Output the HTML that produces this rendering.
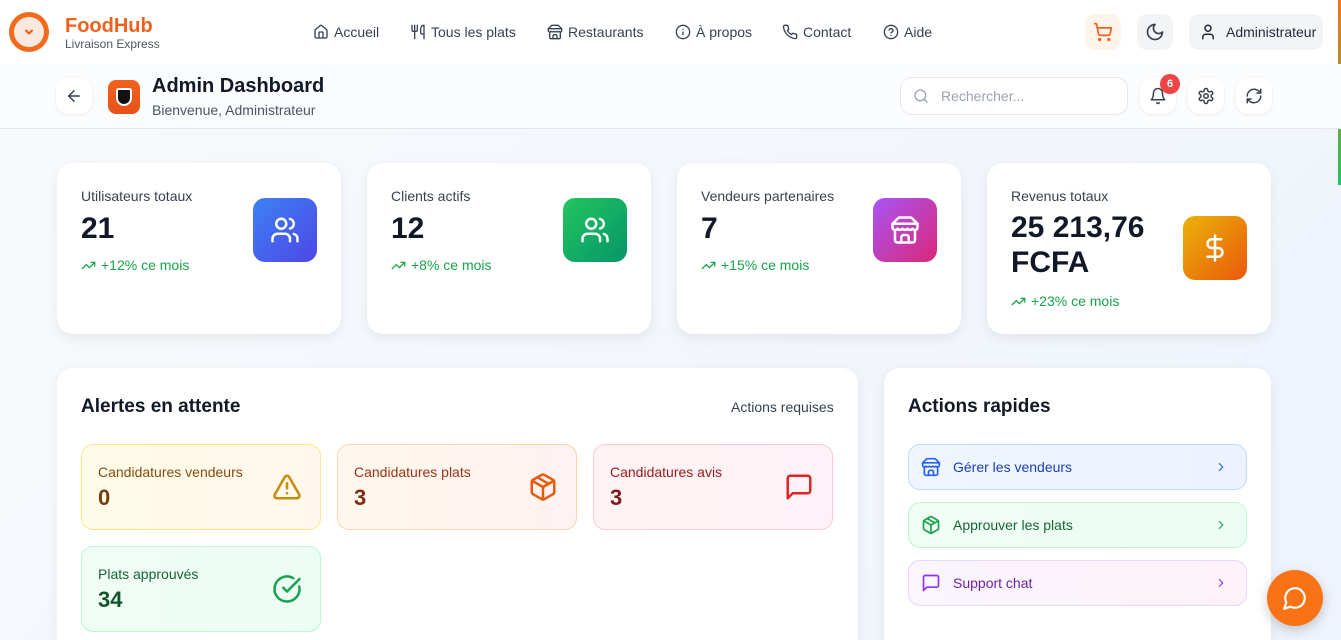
<!DOCTYPE html>
<html style="height:640px;overflow:hidden"><head><meta charset="utf-8"><style>
*{box-sizing:border-box;margin:0;padding:0}
body{width:1341px;height:640px;overflow:hidden;font-family:"Liberation Sans",sans-serif;background:linear-gradient(135deg,#f8fafc,#eef3fc);position:relative;color:#111827}
.a{position:absolute}
svg{fill:none;stroke:currentColor;stroke-width:2;stroke-linecap:round;stroke-linejoin:round}
.nav{top:0;left:0;width:1341px;height:64px;background:#fff}
.navl{top:24px;font-size:14px;color:#374151;display:flex;align-items:center;gap:5px}
.sub{top:64px;left:0;width:1341px;height:65px;background:#fafcfe;border-bottom:1px solid #e5e7eb}
.ib{width:36px;height:36px;border-radius:12px;background:#fff;box-shadow:0 1px 3px rgba(0,0,0,.08);display:flex;align-items:center;justify-content:center;color:#374151}
.card{background:#fff;border-radius:16px;box-shadow:0 4px 12px rgba(0,0,0,.07)}
.sl{font-size:14px;color:#374151}
.sv{font-size:30px;font-weight:bold;color:#111827}
.tr{font-size:14px;color:#16a34a;display:flex;align-items:center;gap:5px}
.ic{width:64px;height:64px;border-radius:12px;display:flex;align-items:center;justify-content:center;color:#fff}
.al{width:240px;height:86px;border-radius:12px;border:1px solid}
.al .t{position:absolute;left:16px;top:19px;font-size:14px}
.al .n{position:absolute;left:16px;top:40px;font-size:22px;font-weight:bold}
.al svg{position:absolute;right:18px;top:27px}
.qa{left:24px;width:339px;height:46px;border-radius:12px;border:1px solid;display:flex;align-items:center;padding-left:12px;font-size:14px;gap:12px}
.qa .ch{position:absolute;right:18px;top:15px}
</style></head><body>
<div class="a nav"></div>
<div class="a" style="left:9px;top:12px;width:40px;height:40px;border-radius:50%;background:#f26b1d;display:flex;align-items:center;justify-content:center"><div style="width:30px;height:30px;border-radius:50%;background:#fbe9df;display:flex;align-items:center;justify-content:center"><svg width="12" height="12" viewBox="0 0 24 24" style="color:#ea580c;stroke-width:4"><path d="m6 9 6 6 6-6"/></svg></div></div>
<div class="a" style="left:65px;top:15px;font-size:20px;font-weight:bold;color:#f0621c">FoodHub</div>
<div class="a" style="left:65px;top:37px;font-size:12px;color:#4b5563">Livraison Express</div>
<div class="a navl" style="left:313px"><svg width="16" height="16" viewBox="0 0 24 24"><path d="M15 21v-8a1 1 0 0 0-1-1h-4a1 1 0 0 0-1 1v8"/><path d="M3 10a2 2 0 0 1 .709-1.528l7-5.999a2 2 0 0 1 2.582 0l7 5.999A2 2 0 0 1 21 10v9a2 2 0 0 1-2 2H5a2 2 0 0 1-2-2z"/></svg>Accueil</div>
<div class="a navl" style="left:410px"><svg width="16" height="16" viewBox="0 0 24 24"><path d="M3 2v7c0 1.1.9 2 2 2h4a2 2 0 0 0 2-2V2"/><path d="M7 2v20"/><path d="M21 15V2a5 5 0 0 0-5 5v6c0 1.1.9 2 2 2h3Zm0 0v7"/></svg>Tous les plats</div>
<div class="a navl" style="left:547px"><svg width="16" height="16" viewBox="0 0 24 24"><path d="m2 7 4.41-4.41A2 2 0 0 1 7.83 2h8.34a2 2 0 0 1 1.42.59L22 7"/><path d="M4 12v8a2 2 0 0 0 2 2h12a2 2 0 0 0 2-2v-8"/><path d="M15 22v-4a2 2 0 0 0-2-2h-2a2 2 0 0 0-2 2v4"/><path d="M2 7h20"/><path d="M22 7v3a2 2 0 0 1-2 2 2.7 2.7 0 0 1-2-1 2.7 2.7 0 0 1-4 0 2.7 2.7 0 0 1-4 0 2.7 2.7 0 0 1-4 0 2.7 2.7 0 0 1-2 1 2 2 0 0 1-2-2V7"/></svg>Restaurants</div>
<div class="a navl" style="left:675px"><svg width="16" height="16" viewBox="0 0 24 24"><circle cx="12" cy="12" r="10"/><path d="M12 16v-4"/><path d="M12 8h.01"/></svg>À propos</div>
<div class="a navl" style="left:782px"><svg width="16" height="16" viewBox="0 0 24 24"><path d="M22 16.92v3a2 2 0 0 1-2.18 2 19.79 19.79 0 0 1-8.63-3.070 19.5 19.5 0 0 1-6-6 19.79 19.79 0 0 1-3.07-8.67A2 2 0 0 1 4.11 2h3a2 2 0 0 1 2 1.72 12.84 12.84 0 0 0 .7 2.81 2 2 0 0 1-.45 2.11L8.09 9.91a16 16 0 0 0 6 6l1.27-1.27a2 2 0 0 1 2.11-.45 12.84 12.84 0 0 0 2.81.7A2 2 0 0 1 22 16.92z"/></svg>Contact</div>
<div class="a navl" style="left:883px"><svg width="16" height="16" viewBox="0 0 24 24"><circle cx="12" cy="12" r="10"/><path d="M9.09 9a3 3 0 0 1 5.83 1c0 2-3 3-3 3"/><path d="M12 17h.01"/></svg>Aide</div>
<div class="a" style="left:1085px;top:14px;width:36px;height:36px;border-radius:10px;background:#fff4ea;display:flex;align-items:center;justify-content:center;color:#f0621c"><svg width="20" height="20" viewBox="0 0 24 24"><circle cx="8" cy="21" r="1"/><circle cx="19" cy="21" r="1"/><path d="M2.05 2.05h2l2.66 12.42a2 2 0 0 0 2 1.58h9.78a2 2 0 0 0 1.95-1.57l1.65-7.43H5.12"/></svg></div>
<div class="a" style="left:1137px;top:14px;width:36px;height:36px;border-radius:10px;background:#f3f4f6;display:flex;align-items:center;justify-content:center;color:#374151"><svg width="20" height="20" viewBox="0 0 24 24"><path d="M12 3a6 6 0 0 0 9 9 9 9 0 1 1-9-9Z"/></svg></div>
<div class="a" style="left:1189px;top:14px;width:134px;height:36px;border-radius:10px;background:#f3f4f6;display:flex;align-items:center;padding-left:10px;gap:9px;font-size:14px;color:#1f2937"><svg width="18" height="18" viewBox="0 0 24 24"><path d="M19 21v-2a4 4 0 0 0-4-4H9a4 4 0 0 0-4 4v2"/><circle cx="12" cy="7" r="4"/></svg>Administrateur</div>
<div class="a" style="left:1338px;top:0;width:3px;height:185px;background:linear-gradient(#f97316,#22c55e)"></div>

<div class="a sub"></div>
<div class="a ib" style="left:56px;top:78px"><svg width="18" height="18" viewBox="0 0 24 24"><path d="m12 19-7-7 7-7"/><path d="M19 12H5"/></svg></div>
<div class="a" style="left:108px;top:80px;width:32px;height:34px;border-radius:8px;background:linear-gradient(#f0621c,#e8521a);display:flex;align-items:center;justify-content:center"><div style="width:16px;height:18px;background:#111;border:2px solid #fff;border-radius:3px 3px 9px 9px"></div></div>
<div class="a" style="left:152px;top:75px;font-size:20px;font-weight:bold;color:#111827">Admin Dashboard</div>
<div class="a" style="left:152px;top:102px;font-size:14px;color:#4b5563">Bienvenue, Administrateur</div>
<div class="a" style="left:900px;top:77px;width:228px;height:38px;border:1px solid #e5e7eb;border-radius:12px;background:#fff;display:flex;align-items:center;padding-left:12px;gap:12px;font-size:14px;color:#9ca3af"><svg width="16" height="16" viewBox="0 0 24 24"><circle cx="11" cy="11" r="8"/><path d="m21 21-4.3-4.3"/></svg>Rechercher...</div>
<div class="a ib" style="left:1140px;top:78px"><svg width="18" height="18" viewBox="0 0 24 24"><path d="M6 8a6 6 0 0 1 12 0c0 7 3 9 3 9H3s3-2 3-9"/><path d="M10.3 21a1.94 1.94 0 0 0 3.4 0"/></svg></div>
<div class="a" style="left:1160px;top:74px;width:20px;height:20px;border-radius:50%;background:#ef4444;color:#fff;font-size:11px;font-weight:bold;display:flex;align-items:center;justify-content:center">6</div>
<div class="a ib" style="left:1188px;top:78px"><svg width="18" height="18" viewBox="0 0 24 24"><path d="M12.22 2h-.44a2 2 0 0 0-2 2v.18a2 2 0 0 1-1 1.73l-.43.25a2 2 0 0 1-2 0l-.15-.08a2 2 0 0 0-2.73.73l-.22.38a2 2 0 0 0 .73 2.73l.15.1a2 2 0 0 1 1 1.72v.51a2 2 0 0 1-1 1.74l-.15.09a2 2 0 0 0-.73 2.73l.22.38a2 2 0 0 0 2.73.73l.15-.08a2 2 0 0 1 2 0l.43.25a2 2 0 0 1 1 1.73V20a2 2 0 0 0 2 2h.44a2 2 0 0 0 2-2v-.18a2 2 0 0 1 1-1.73l.43-.25a2 2 0 0 1 2 0l.15.08a2 2 0 0 0 2.73-.73l.22-.39a2 2 0 0 0-.73-2.73l-.15-.08a2 2 0 0 1-1-1.74v-.5a2 2 0 0 1 1-1.74l.15-.09a2 2 0 0 0 .73-2.73l-.22-.38a2 2 0 0 0-2.73-.73l-.15.08a2 2 0 0 1-2 0l-.43-.25a2 2 0 0 1-1-1.73V4a2 2 0 0 0-2-2z"/><circle cx="12" cy="12" r="3"/></svg></div>
<div class="a ib" style="left:1236px;top:78px"><svg width="18" height="18" viewBox="0 0 24 24"><path d="M3 12a9 9 0 0 1 9-9 9.75 9.75 0 0 1 6.74 2.74L21 8"/><path d="M21 3v5h-5"/><path d="M21 12a9 9 0 0 1-9 9 9.75 9.75 0 0 1-6.74-2.74L3 16"/><path d="M8 16H3v5"/></svg></div>

<div class="a card" style="left:57px;top:163px;width:284px;height:171px"></div>
<div class="a sl" style="left:81px;top:188px">Utilisateurs totaux</div>
<div class="a sv" style="left:81px;top:212px">21</div>
<div class="a tr" style="left:81px;top:257px"><svg width="15" height="15" viewBox="0 0 24 24"><polyline points="22 7 13.5 15.5 8.5 10.5 2 17"/><polyline points="16 7 22 7 22 13"/></svg>+12% ce mois</div>
<div class="a ic" style="left:253px;top:198px;background:linear-gradient(135deg,#3b82f6,#4f46e5)"><svg width="30" height="30" viewBox="0 0 24 24"><path d="M16 21v-2a4 4 0 0 0-4-4H6a4 4 0 0 0-4 4v2"/><circle cx="9" cy="7" r="4"/><path d="M22 21v-2a4 4 0 0 0-3-3.87"/><path d="M16 3.13a4 4 0 0 1 0 7.75"/></svg></div>

<div class="a card" style="left:367px;top:163px;width:284px;height:171px"></div>
<div class="a sl" style="left:391px;top:188px">Clients actifs</div>
<div class="a sv" style="left:391px;top:212px">12</div>
<div class="a tr" style="left:391px;top:257px"><svg width="15" height="15" viewBox="0 0 24 24"><polyline points="22 7 13.5 15.5 8.5 10.5 2 17"/><polyline points="16 7 22 7 22 13"/></svg>+8% ce mois</div>
<div class="a ic" style="left:563px;top:198px;background:linear-gradient(135deg,#22c55e,#059669)"><svg width="30" height="30" viewBox="0 0 24 24"><path d="M16 21v-2a4 4 0 0 0-4-4H6a4 4 0 0 0-4 4v2"/><circle cx="9" cy="7" r="4"/><path d="M22 21v-2a4 4 0 0 0-3-3.87"/><path d="M16 3.13a4 4 0 0 1 0 7.75"/></svg></div>

<div class="a card" style="left:677px;top:163px;width:284px;height:171px"></div>
<div class="a sl" style="left:701px;top:188px">Vendeurs partenaires</div>
<div class="a sv" style="left:701px;top:212px">7</div>
<div class="a tr" style="left:701px;top:257px"><svg width="15" height="15" viewBox="0 0 24 24"><polyline points="22 7 13.5 15.5 8.5 10.5 2 17"/><polyline points="16 7 22 7 22 13"/></svg>+15% ce mois</div>
<div class="a ic" style="left:873px;top:198px;background:linear-gradient(135deg,#a855f7,#db2777)"><svg width="30" height="30" viewBox="0 0 24 24"><path d="m2 7 4.41-4.41A2 2 0 0 1 7.83 2h8.34a2 2 0 0 1 1.42.59L22 7"/><path d="M4 12v8a2 2 0 0 0 2 2h12a2 2 0 0 0 2-2v-8"/><path d="M15 22v-4a2 2 0 0 0-2-2h-2a2 2 0 0 0-2 2v4"/><path d="M2 7h20"/><path d="M22 7v3a2 2 0 0 1-2 2 2.7 2.7 0 0 1-2-1 2.7 2.7 0 0 1-4 0 2.7 2.7 0 0 1-4 0 2.7 2.7 0 0 1-4 0 2.7 2.7 0 0 1-2 1 2 2 0 0 1-2-2V7"/></svg></div>

<div class="a card" style="left:987px;top:163px;width:284px;height:171px"></div>
<div class="a sl" style="left:1011px;top:188px">Revenus totaux</div>
<div class="a sv" style="left:1011px;top:210px;line-height:35px">25 213,76<br>FCFA</div>
<div class="a tr" style="left:1011px;top:293px"><svg width="15" height="15" viewBox="0 0 24 24"><polyline points="22 7 13.5 15.5 8.5 10.5 2 17"/><polyline points="16 7 22 7 22 13"/></svg>+23% ce mois</div>
<div class="a ic" style="left:1183px;top:216px;background:linear-gradient(135deg,#eab308,#ea580c)"><svg width="30" height="30" viewBox="0 0 24 24"><line x1="12" x2="12" y1="2" y2="22"/><path d="M17 5H9.5a3.5 3.5 0 0 0 0 7h5a3.5 3.5 0 0 1 0 7H6"/></svg></div>

<div class="a card" style="left:57px;top:368px;width:801px;height:300px"></div>
<div class="a" style="left:81px;top:396px;font-size:19px;font-weight:bold">Alertes en attente</div>
<div class="a" style="left:731px;top:399px;font-size:14px;color:#374151">Actions requises</div>
<div class="a al" style="left:81px;top:444px;background:linear-gradient(90deg,#fefce8,#fff7ed);border-color:#fde68a"><div class="t" style="color:#854d0e">Candidatures vendeurs</div><div class="n" style="color:#713f12">0</div><svg width="30" height="30" viewBox="0 0 24 24" style="color:#ca8a04"><path d="m21.73 18-8-14a2 2 0 0 0-3.48 0l-8 14A2 2 0 0 0 4 21h16a2 2 0 0 0 1.73-3"/><path d="M12 9v4"/><path d="M12 17h.01"/></svg></div>
<div class="a al" style="left:337px;top:444px;background:linear-gradient(90deg,#fff7ed,#fef2f2);border-color:#fed7aa"><div class="t" style="color:#9a3412">Candidatures plats</div><div class="n" style="color:#7c2d12">3</div><svg width="30" height="30" viewBox="0 0 24 24" style="color:#ea580c"><path d="m7.5 4.27 9 5.15"/><path d="M21 8a2 2 0 0 0-1-1.73l-7-4a2 2 0 0 0-2 0l-7 4A2 2 0 0 0 3 8v8a2 2 0 0 0 1 1.73l7 4a2 2 0 0 0 2 0l7-4A2 2 0 0 0 21 16Z"/><path d="m3.3 7 8.7 5 8.7-5"/><path d="M12 22V12"/></svg></div>
<div class="a al" style="left:593px;top:444px;background:linear-gradient(90deg,#fef2f2,#fdf2f8);border-color:#fecdd3"><div class="t" style="color:#991b1b">Candidatures avis</div><div class="n" style="color:#7f1d1d">3</div><svg width="30" height="30" viewBox="0 0 24 24" style="color:#dc2626"><path d="M21 15a2 2 0 0 1-2 2H7l-4 4V5a2 2 0 0 1 2-2h14a2 2 0 0 1 2 2z"/></svg></div>
<div class="a al" style="left:81px;top:546px;background:linear-gradient(90deg,#f0fdf4,#ecfdf5);border-color:#bbf7d0"><div class="t" style="color:#166534">Plats approuvés</div><div class="n" style="color:#14532d">34</div><svg width="30" height="30" viewBox="0 0 24 24" style="color:#16a34a"><path d="M21.801 10A10 10 0 1 1 17 3.335"/><path d="m9 11 3 3L22 4"/></svg></div>

<div class="a card" style="left:884px;top:368px;width:387px;height:300px"></div>
<div class="a" style="left:908px;top:396px;font-size:19px;font-weight:bold">Actions rapides</div>
<div class="a" style="left:884px;top:368px;width:387px;height:300px">
<div class="a qa" style="top:76px;background:linear-gradient(90deg,#eff6ff,#eef2ff);border-color:#bfdbfe;color:#1e40af"><svg width="20" height="20" viewBox="0 0 24 24" style="color:#2563eb"><path d="m2 7 4.41-4.41A2 2 0 0 1 7.830 2h8.34a2 2 0 0 1 1.42.59L22 7"/><path d="M4 12v8a2 2 0 0 0 2 2h12a2 2 0 0 0 2-2v-8"/><path d="M15 22v-4a2 2 0 0 0-2-2h-2a2 2 0 0 0-2 2v4"/><path d="M2 7h20"/><path d="M22 7v3a2 2 0 0 1-2 2 2.7 2.7 0 0 1-2-1 2.7 2.7 0 0 1-4 0 2.7 2.7 0 0 1-4 0 2.7 2.7 0 0 1-4 0 2.7 2.7 0 0 1-2 1 2 2 0 0 1-2-2V7"/></svg>Gérer les vendeurs<svg class="ch" width="14" height="14" viewBox="0 0 24 24" style="color:#2563eb"><path d="m9 18 6-6-6-6"/></svg></div>
<div class="a qa" style="top:134px;background:linear-gradient(90deg,#f0fdf4,#ecfdf5);border-color:#bbf7d0;color:#166534"><svg width="20" height="20" viewBox="0 0 24 24" style="color:#16a34a"><path d="m7.5 4.27 9 5.15"/><path d="M21 8a2 2 0 0 0-1-1.730l-7-4a2 2 0 0 0-2 0l-7 4A2 2 0 0 0 3 8v8a2 2 0 0 0 1 1.73l7 4a2 2 0 0 0 2 0l7-4A2 2 0 0 0 21 16Z"/><path d="m3.3 7 8.7 5 8.7-5"/><path d="M12 22V12"/></svg>Approuver les plats<svg class="ch" width="14" height="14" viewBox="0 0 24 24" style="color:#16a34a"><path d="m9 18 6-6-6-6"/></svg></div>
<div class="a qa" style="top:192px;background:linear-gradient(90deg,#faf5ff,#fdf2f8);border-color:#e9d5ff;color:#6b21a8"><svg width="20" height="20" viewBox="0 0 24 24" style="color:#9333ea"><path d="M21 15a2 2 0 0 1-2 2H7l-4 4V5a2 2 0 0 1 2-2h14a2 2 0 0 1 2 2z"/></svg>Support chat<svg class="ch" width="14" height="14" viewBox="0 0 24 24" style="color:#9333ea"><path d="m9 18 6-6-6-6"/></svg></div>
</div>
<div class="a" style="left:1267px;top:570px;width:56px;height:56px;border-radius:50%;background:#f97316;box-shadow:0 4px 12px rgba(0,0,0,.2);display:flex;align-items:center;justify-content:center;color:#fff"><svg width="26" height="26" viewBox="0 0 24 24"><path d="M7.9 20A9 9 0 1 0 4 16.1L2 22Z"/></svg></div>
</body></html>
